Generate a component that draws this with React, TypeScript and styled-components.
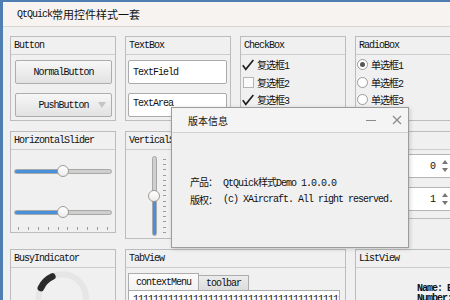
import React from "react";
import styled, { createGlobalStyle } from "styled-components";

const GlobalStyle = createGlobalStyle`
  html, body {
    margin: 0;
    padding: 0;
  }
  body {
    width: 450px;
    height: 300px;
    overflow: hidden;
    background: #f0f0f0;
    font-family: "Liberation Mono", "Noto Sans CJK SC", monospace;
    font-size: 10px;
    letter-spacing: -1px;
    color: #111;
  }
`;

const Frame = styled.div`
  position: relative;
  width: 470px;
  height: 300px;
  box-sizing: border-box;
  border-left: 3px solid #4f7eb3;
  border-top: 2px solid #4f7eb3;
  background: #f0f0f0;
  display: flex;
  flex-direction: column;
`;

const TitleBar = styled.div`
  height: 24px;
  flex-shrink: 0;
  display: flex;
  align-items: center;
  padding-left: 14px;
  background: #f6f3f1;
  border-bottom: 1px solid #d6d6d6;
`;

const Cjk = styled.span`
  font-size: 11px;
  letter-spacing: 0;
`;

const Body = styled.div`
  padding: 9px 0 0 7px;
  display: grid;
  grid-template-columns: repeat(4, 106px);
  column-gap: 9px;
  row-gap: 10px;
  align-items: start;
`;

const Group = styled.div<{ $h: number; $span?: number }>`
  height: ${(p) => p.$h}px;
  grid-column: span ${(p) => p.$span ?? 1};
  box-sizing: border-box;
  border: 1px solid #bcbcbc;
  display: flex;
  flex-direction: column;
  overflow: hidden;
`;

const GroupTitle = styled.div`
  height: 17px;
  line-height: 17px;
  flex-shrink: 0;
  padding-left: 3px;
  border-bottom: 1px solid #cdcdcd;
`;

const Stack = styled.div<{ $pad: string; $gap: number }>`
  display: flex;
  flex-direction: column;
  gap: ${(p) => p.$gap}px;
  padding: ${(p) => p.$pad};
`;

const Button = styled.div`
  position: relative;
  height: 24px;
  box-sizing: border-box;
  border: 1px solid #adadad;
  border-radius: 2px;
  background: linear-gradient(#f7f7f7, #e2e2e2);
  display: flex;
  align-items: center;
  justify-content: center;
`;

const MenuArrow = styled.span`
  position: absolute;
  right: 5px;
  top: 8px;
  width: 0;
  height: 0;
  border-left: 4px solid transparent;
  border-right: 4px solid transparent;
  border-top: 6px solid #c4c4c4;
`;

const Field = styled.div<{ $top?: boolean }>`
  height: 24px;
  box-sizing: border-box;
  border: 1px solid #ababab;
  border-radius: 2px;
  background: #fff;
  padding: ${(p) => (p.$top ? "4px 4px 0" : "0 4px")};
  display: flex;
  align-items: ${(p) => (p.$top ? "flex-start" : "center")};
`;

const Option = styled.div`
  height: 17.5px;
  display: flex;
  align-items: center;
  gap: 3px;
`;

const Box = styled.span`
  width: 11px;
  height: 11px;
  box-sizing: border-box;
  border: 1px solid #b5b5b5;
  background: #fafafa;
  margin-left: 1px;
`;

const Radio = styled.span<{ $on?: boolean }>`
  width: 11px;
  height: 11px;
  box-sizing: border-box;
  border-radius: 50%;
  border: 1px solid #9a9a9a;
  background: #fff;
  margin-left: 1px;
  display: flex;
  align-items: center;
  justify-content: center;
  &::after {
    content: "";
    width: 5px;
    height: 5px;
    border-radius: 50%;
    background: ${(p) => (p.$on ? "#555" : "transparent")};
  }
`;

const HSliderBox = styled.div<{ $mt: number }>`
  position: relative;
  height: 12px;
  margin: ${(p) => p.$mt}px 3px 0;
  display: flex;
  align-items: center;
`;

const HTrack = styled.div`
  flex: 1;
  height: 5px;
  box-sizing: border-box;
  border-radius: 3px;
  border: 1px solid #a9a9a9;
  background: #cfcfcf;
  overflow: hidden;
`;

const HFill = styled.div`
  height: 100%;
  background: #4a8fd9;
`;

const Knob = styled.span`
  position: absolute;
  width: 12px;
  height: 12px;
  box-sizing: border-box;
  border-radius: 50%;
  border: 1px solid #a39a92;
  background: linear-gradient(#ffffff, #ececec);
`;

const Ticks = styled.div`
  display: flex;
  justify-content: space-between;
  margin: 9px 7px 0 7px;
`;

const Tick = styled.span`
  width: 1px;
  height: 3px;
  background: #9a9a9a;
`;

const VSliderRow = styled.div`
  display: flex;
  padding: 6px 0 0 22px;
  gap: 3px;
`;

const VSliderBox = styled.div`
  position: relative;
  width: 12px;
  height: 80px;
  display: flex;
  justify-content: center;
`;

const VTrack = styled.div`
  width: 5px;
  height: 100%;
  box-sizing: border-box;
  border-radius: 3px;
  border: 1px solid #a9a9a9;
  background: #cfcfcf;
  display: flex;
  flex-direction: column;
  justify-content: flex-end;
  overflow: hidden;
`;

const VFill = styled.div`
  width: 100%;
  background: #4a8fd9;
`;

const VTicks = styled.div`
  display: flex;
  flex-direction: column;
  justify-content: space-between;
  padding: 3px 0;
`;

const VTick = styled.span`
  width: 3px;
  height: 1px;
  background: #9a9a9a;
`;

const Spin = styled.div`
  height: 24px;
  box-sizing: border-box;
  border: 1px solid #b5b5b5;
  background: #fff;
  display: flex;
  align-items: center;
  justify-content: flex-end;
  gap: 6px;
  padding-right: 2px;
`;

const TabArea = styled.div`
  display: flex;
  flex-direction: column;
  padding: 5px 5px 0 2px;
`;

const TabBar = styled.div`
  display: flex;
  align-items: flex-end;
  height: 17px;
`;

const Tab = styled.div<{ $on?: boolean }>`
  height: ${(p) => (p.$on ? 17 : 15)}px;
  box-sizing: border-box;
  padding: 0 7px;
  display: flex;
  align-items: center;
  border: 1px solid #acacac;
  border-bottom: none;
  border-left-width: ${(p) => (p.$on ? 1 : 0)}px;
  background: ${(p) =>
    p.$on ? "linear-gradient(#fbfbfb, #f2f2f2)" : "linear-gradient(#ececec, #dcdcdc)"};
`;

const TabPage = styled.div`
  height: 30px;
  border: 1px solid #acacac;
  background: #fff;
  padding: 3px 4px;
  white-space: nowrap;
  overflow: hidden;
`;

const ListBody = styled.div`
  padding: 16px 0 0 61px;
  font-weight: bold;
  line-height: 10px;
  white-space: nowrap;
`;

const Dialog = styled.div`
  position: absolute;
  left: 168px;
  top: 105px;
  width: 238px;
  height: 141px;
  box-sizing: border-box;
  border: 1px solid #9c9c9c;
  background: #f0f0f0;
  box-shadow: 1px 1px 4px rgba(0, 0, 0, 0.18);
  display: flex;
  flex-direction: column;
`;

const DialogHead = styled.div`
  height: 24px;
  flex-shrink: 0;
  display: flex;
  align-items: center;
  padding: 0 6px 0 16px;
  background: #f4f4f4;
  border-bottom: 1px solid #d2d2d2;
  letter-spacing: 0;
`;

const DialogTitle = styled.span`
  flex: 1;
`;

const HeadIcon = styled.svg`
  margin-left: 15px;
`;

const DialogBody = styled.div`
  flex: 1;
  display: flex;
  flex-direction: column;
  justify-content: center;
  padding-left: 18px;
`;

const InfoRow = styled.div`
  display: flex;
  height: 18px;
  align-items: center;
  white-space: nowrap;
`;

const InfoLabel = styled.span`
  width: 33px;
`;

const checkmark = (
  <svg width="12" height="12" viewBox="0 0 12 12">
    <path d="M0.8 6.2 L3.8 10.4 L11.4 1" fill="none" stroke="#1e1e1e" strokeWidth="1.7" />
  </svg>
);

function HSlider({ value, mt }: { value: number; mt: number }) {
  return (
    <HSliderBox $mt={mt}>
      <HTrack>
        <HFill style={{ width: `${value * 100}%` }} />
      </HTrack>
      <Knob style={{ left: `calc(${value * 100}% - 6px)` }} />
    </HSliderBox>
  );
}

function SpinArrows() {
  return (
    <svg width="8" height="14" viewBox="0 0 8 14">
      <path d="M4 1 L7 5 L1 5 Z" fill="#777" />
      <path d="M4 13 L7 9 L1 9 Z" fill="#777" />
    </svg>
  );
}

export default function App() {
  const vValue = 0.5;
  return (
    <>
      <GlobalStyle />
      <Frame>
        <TitleBar>
          QtQuick<Cjk>常用控件样式一套</Cjk>
        </TitleBar>
        <Body>
          <Group $h={85}>
            <GroupTitle>Button</GroupTitle>
            <Stack $pad="5px 3px 0 4px" $gap={9}>
              <Button>NormalButton</Button>
              <Button>
                PushButton
                <MenuArrow />
              </Button>
            </Stack>
          </Group>
          <Group $h={85}>
            <GroupTitle>TextBox</GroupTitle>
            <Stack $pad="5px 3px 0 2px" $gap={9}>
              <Field>TextField</Field>
              <Field $top>TextArea</Field>
            </Stack>
          </Group>
          <Group $h={85}>
            <GroupTitle>CheckBox</GroupTitle>
            <Stack $pad="1px 0 0 1px" $gap={0}>
              <Option>{checkmark}复选框1</Option>
              <Option>
                <Box />
                复选框2
              </Option>
              <Option>{checkmark}复选框3</Option>
            </Stack>
          </Group>
          <Group $h={85}>
            <GroupTitle>RadioBox</GroupTitle>
            <Stack $pad="1px 0 0 0" $gap={0}>
              <Option>
                <Radio $on />
                单选框1
              </Option>
              <Option>
                <Radio />
                单选框2
              </Option>
              <Option>
                <Radio />
                单选框3
              </Option>
            </Stack>
          </Group>

          <Group $h={102}>
            <GroupTitle>HorizontalSlider</GroupTitle>
            <HSlider value={0.5} mt={15} />
            <HSlider value={0.5} mt={29} />
            <Ticks>
              {Array.from({ length: 10 }).map((_, i) => (
                <Tick key={i} />
              ))}
            </Ticks>
          </Group>
          <Group $h={108}>
            <GroupTitle>VerticalSlider</GroupTitle>
            <VSliderRow>
              <VSliderBox>
                <VTrack>
                  <VFill style={{ height: `${vValue * 100}%` }} />
                </VTrack>
                <Knob style={{ top: `calc(${(1 - vValue) * 100}% - 6px)` }} />
              </VSliderBox>
              <VTicks>
                {Array.from({ length: 15 }).map((_, i) => (
                  <VTick key={i} />
                ))}
              </VTicks>
            </VSliderRow>
          </Group>
          <Group $h={102}>
            <GroupTitle>ComboBox</GroupTitle>
          </Group>
          <Group $h={88}>
            <GroupTitle>SpinBox</GroupTitle>
            <Stack $pad="4px 8px 0 4px" $gap={9}>
              <Spin>
                0<SpinArrows />
              </Spin>
              <Spin>
                1<SpinArrows />
              </Spin>
            </Stack>
          </Group>

          <Group $h={60}>
            <GroupTitle>BusyIndicator</GroupTitle>
            <svg width="104" height="60" viewBox="0 0 104 60">
              <circle cx="51" cy="45" r="35.5" fill="none" stroke="#e6e6e6" strokeWidth="9" />
              <path
                d="M18.8 30 A35.5 35.5 0 0 1 36 12.8"
                fill="none"
                stroke="#2b2b2b"
                strokeWidth="10"
                strokeLinecap="round"
              />
            </svg>
          </Group>
          <Group $h={60} $span={2}>
            <GroupTitle>TabView</GroupTitle>
            <TabArea>
              <TabBar>
                <Tab $on>contextMenu</Tab>
                <Tab>toolbar</Tab>
              </TabBar>
              <TabPage>{"1".repeat(60)}</TabPage>
            </TabArea>
          </Group>
          <Group $h={60}>
            <GroupTitle>ListView</GroupTitle>
            <ListBody>
              <div>Name: Bill Smith</div>
              <div>Number: 555 3264</div>
            </ListBody>
          </Group>
        </Body>

        <Dialog>
          <DialogHead>
            <DialogTitle>版本信息</DialogTitle>
            <HeadIcon width="11" height="10" viewBox="0 0 11 10">
              <path d="M0 5.5 H10" stroke="#8a8a8a" strokeWidth="1" />
            </HeadIcon>
            <HeadIcon width="10" height="10" viewBox="0 0 10 10">
              <path d="M1 1 L9 9 M9 1 L1 9" stroke="#8a8a8a" strokeWidth="1.2" />
            </HeadIcon>
          </DialogHead>
          <DialogBody>
            <InfoRow>
              <InfoLabel>产品：</InfoLabel>
              QtQuick样式Demo 1.0.0.0
            </InfoRow>
            <InfoRow>
              <InfoLabel>版权：</InfoLabel>
              (c) XAircraft. All right reserved.
            </InfoRow>
          </DialogBody>
        </Dialog>
      </Frame>
    </>
  );
}
